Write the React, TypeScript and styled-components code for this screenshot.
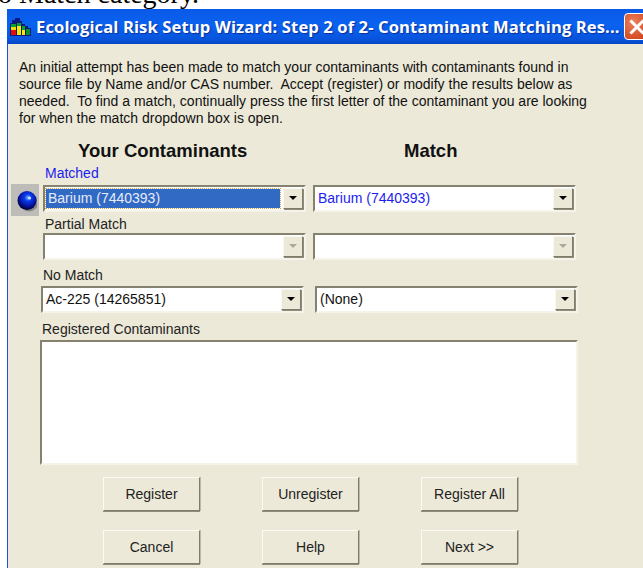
import React from "react";
import styled, { createGlobalStyle } from "styled-components";

const GlobalStyle = createGlobalStyle`
  html, body {
    margin: 0;
    padding: 0;
    width: 643px;
    height: 568px;
    overflow: hidden;
    background: #fff;
  }
`;

const Page = styled.div`
  width: 643px;
  height: 568px;
  overflow: hidden;
`;

// Last line of the surrounding document, mostly scrolled off above the dialog
const DocLine = styled.div`
  height: 9px;
  margin-top: -19px;
  margin-bottom: 19px;
  margin-left: -2px;
  font: 28px/26px "Liberation Serif", serif;
  color: #000;
  white-space: nowrap;
`;

const Window = styled.div`
  margin-left: 7px;
  width: 640px;
  height: 568px;
  background: #ece9d8;
  border-left: 1px solid #1a55e0;
  font-family: "Liberation Sans", Arial, sans-serif;
`;

const TitleBar = styled.div`
  height: 35px;
  display: flex;
  align-items: center;
  gap: 5px;
  padding-left: 3px;
  margin-left: -1px;
  background: linear-gradient(180deg, #0a5ae6 0%, #0a62f0 45%, #0855dd 85%, #0645c4 100%);
  overflow: hidden;
`;

const TitleText = styled.span`
  flex: 1;
  min-width: 0;
  color: #fff;
  font: 700 16.6px "Open Sans", sans-serif;
  letter-spacing: 0.1px;
  text-shadow: 1px 1px 1px #0a2f9c;
  white-space: nowrap;
`;

const CloseButton = styled.div`
  width: 26px;
  height: 27px;
  flex: none;
  margin-right: -2px;
  box-sizing: border-box;
  border: 1px solid #fff;
  border-radius: 4px;
  background: radial-gradient(circle at 35% 35%, #e8845f, #d9532c 60%, #c23f1a);
  display: flex;
  align-items: center;
  justify-content: center;
`;

const Body = styled.div`
  padding-top: 15px;
`;

const Intro = styled.p`
  margin: 0 0 0 11px;
  font-size: 14px;
  line-height: 17px;
  color: #111;
  white-space: pre;
  height: 83px;
`;

const Headers = styled.div`
  display: grid;
  grid-template-columns: 326px auto;
  padding-left: 70px;
  font-size: 18.5px;
  font-weight: 700;
  line-height: 18px;
  color: #111;
  margin-bottom: 6px;
`;

const FieldLabel = styled.div<{ $indent: number; $blue?: boolean; $above?: number; $below?: number }>`
  padding-left: ${(p) => p.$indent}px;
  margin-top: ${(p) => p.$above ?? 0}px;
  margin-bottom: ${(p) => p.$below ?? 0}px;
  font-size: 14px;
  line-height: 15px;
  color: ${(p) => (p.$blue ? "#1c1cf0" : "#222")};
`;

const ComboRow = styled.div<{ $left: number; $gap: number }>`
  display: flex;
  align-items: center;
  height: 28px;
  padding-left: ${(p) => p.$left}px;
  gap: ${(p) => p.$gap}px;
  margin-top: 3px;
  margin-bottom: 3px;
`;

const Indicator = styled.div`
  width: 28px;
  height: 32px;
  margin-left: -32px;
  margin-right: -3px;
  margin-top: 3px;
  flex: none;
  background: #bdbcb8;
  display: flex;
  align-items: center;
  justify-content: center;
`;

const Combo = styled.div`
  width: 263px;
  height: 27px;
  flex: none;
  box-sizing: border-box;
  display: flex;
  align-items: stretch;
  background: #fff;
  border: 2px solid;
  border-color: #85826f #f5f3ea #f5f3ea #85826f;
  padding: 1px;
`;

const ComboValue = styled.div<{ $selected?: boolean; $blue?: boolean }>`
  flex: 1;
  font-size: 14px;
  line-height: 18px;
  padding-left: 2px;
  margin: 1px 3px 1px 0;
  white-space: nowrap;
  color: ${(p) => (p.$selected ? "#e8ecf8" : p.$blue ? "#1c1cf0" : "#111")};
  background: ${(p) => (p.$selected ? "#316ac5" : "transparent")};
  outline: ${(p) => (p.$selected ? "1px dotted #c9a24a" : "none")};
`;

const ComboArrowBox = styled.div`
  width: 20px;
  flex: none;
  box-sizing: border-box;
  background: #ece9d8;
  border: 1px solid;
  border-color: #f8f7f0 #7f7c69 #7f7c69 #f8f7f0;
  box-shadow: 1px 1px 0 #8f8c7a;
  display: flex;
  align-items: center;
  justify-content: center;
`;

const ArrowGlyph = styled.span<{ $disabled?: boolean }>`
  width: 0;
  height: 0;
  border-left: 4px solid transparent;
  border-right: 4px solid transparent;
  border-top: 4px solid ${(p) => (p.$disabled ? "#aca899" : "#000")};
`;

const ListBox = styled.div`
  margin-left: 32px;
  margin-top: 3px;
  width: 538px;
  height: 125px;
  box-sizing: border-box;
  background: #fff;
  border: 2px solid;
  border-color: #85826f #f5f3ea #f5f3ea #85826f;
`;

const ButtonGrid = styled.div`
  display: grid;
  grid-template-columns: repeat(3, 97px);
  column-gap: 62px;
  row-gap: 19px;
  padding-left: 95px;
  margin-top: 12px;
`;

const PushButton = styled.button`
  height: 34px;
  padding: 0;
  background: #ece9d8;
  border: 1px solid;
  border-color: #fbfaf4 #7f7c69 #7f7c69 #fbfaf4;
  box-shadow: 0 1px 0 #8f8c7a, 1px 0 0 #bdb9a6;
  font: 14px "Liberation Sans", Arial, sans-serif;
  color: #222;
`;

function ChartIcon() {
  return (
    <svg width="21" height="18" viewBox="0 0 21 18" style={{ flex: "none" }}>
      <path d="M0 5h2V2h3V0h5v3h2v3h3v2h3v2h3v8H0z" fill="#0a1a80" />
      <rect x="1" y="6" width="5" height="3" fill="#0aa030" />
      <rect x="1" y="9" width="5" height="3" fill="#f0e000" />
      <rect x="1" y="12" width="5" height="5" fill="#e01010" />
      <rect x="7" y="5" width="4" height="3" fill="#0aa030" />
      <rect x="7" y="8" width="4" height="9" fill="#f6e800" />
      <rect x="12" y="8" width="3" height="4" fill="#0aa030" />
      <rect x="12" y="12" width="3" height="5" fill="#f6e800" />
      <rect x="16" y="11" width="4" height="6" fill="#089030" />
    </svg>
  );
}

function CloseGlyph() {
  return (
    <svg width="16" height="16" viewBox="0 0 16 16">
      <path d="M2.5 2.5l11 11M13.5 2.5l-11 11" stroke="#fff" strokeWidth="3" strokeLinecap="square" />
    </svg>
  );
}

function Bulb() {
  return (
    <svg width="24" height="24" viewBox="0 0 24 24">
      <defs>
        <radialGradient id="bulb" cx="0.55" cy="0.35" r="0.6">
          <stop offset="0" stopColor="#7fb4ff" />
          <stop offset="0.3" stopColor="#0a3cf0" />
          <stop offset="0.8" stopColor="#040f90" />
          <stop offset="1" stopColor="#020640" />
        </radialGradient>
      </defs>
      <circle cx="16" cy="14.5" r="9" fill="#6f6e6a" opacity="0.7" />
      <circle cx="14" cy="12.5" r="9.5" fill="url(#bulb)" />
      <circle cx="16.5" cy="10" r="1.6" fill="#c8e0ff" />
    </svg>
  );
}

function ComboBox({
  value,
  selected,
  blue,
  disabled,
}: {
  value?: string;
  selected?: boolean;
  blue?: boolean;
  disabled?: boolean;
}) {
  return (
    <Combo>
      <ComboValue $selected={selected} $blue={blue}>
        {value}
      </ComboValue>
      <ComboArrowBox>
        <ArrowGlyph $disabled={disabled} />
      </ComboArrowBox>
    </Combo>
  );
}

const introText = `An initial attempt has been made to match your contaminants with contaminants found in
source file by Name and/or CAS number.  Accept (register) or modify the results below as
needed.  To find a match, continually press the first letter of the contaminant you are looking
for when the match dropdown box is open.`;

export default function App() {
  return (
    <Page>
      <GlobalStyle />
      <DocLine>o Match category.</DocLine>
      <Window>
        <TitleBar>
          <ChartIcon />
          <TitleText>Ecological Risk Setup Wizard: Step 2 of 2- Contaminant Matching Res...</TitleText>
          <CloseButton>
            <CloseGlyph />
          </CloseButton>
        </TitleBar>
        <Body>
          <Intro>{introText}</Intro>
          <Headers>
            <span>Your Contaminants</span>
            <span>Match</span>
          </Headers>
          <FieldLabel $indent={37} $blue $below={2}>
            Matched
          </FieldLabel>
          <ComboRow $left={35} $gap={7}>
            <Indicator>
              <Bulb />
            </Indicator>
            <ComboBox value="Barium (7440393)" selected />
            <ComboBox value="Barium (7440393)" blue />
          </ComboRow>
          <FieldLabel $indent={37} $above={5} $below={-3}>
            Partial Match
          </FieldLabel>
          <ComboRow $left={35} $gap={7}>
            <ComboBox disabled />
            <ComboBox disabled />
          </ComboRow>
          <FieldLabel $indent={35} $above={8} $below={-1}>
            No Match
          </FieldLabel>
          <ComboRow $left={33} $gap={11}>
            <ComboBox value="Ac-225 (14265851)" />
            <ComboBox value="(None)" />
          </ComboRow>
          <FieldLabel $indent={34} $above={9}>
            Registered Contaminants
          </FieldLabel>
          <ListBox />
          <ButtonGrid>
            <PushButton>Register</PushButton>
            <PushButton>Unregister</PushButton>
            <PushButton>Register All</PushButton>
            <PushButton>Cancel</PushButton>
            <PushButton>Help</PushButton>
            <PushButton>Next &gt;&gt;</PushButton>
          </ButtonGrid>
        </Body>
      </Window>
    </Page>
  );
}
